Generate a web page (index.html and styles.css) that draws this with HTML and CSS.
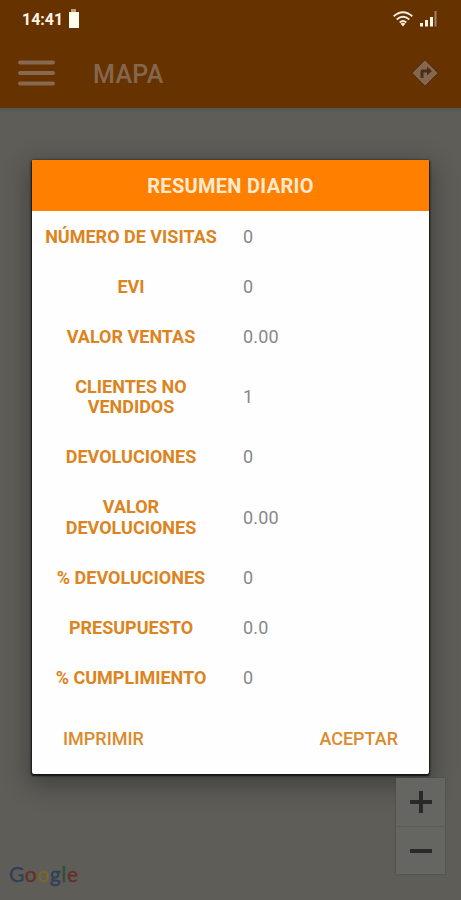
FILE: index.html
```html
<!DOCTYPE html>
<html lang="es">
<head>
<meta charset="utf-8">
<title>Mapa</title>
<link rel="stylesheet" href="styles.css">
</head>
<body>
<div class="screen">
  <header class="top">
    <div class="status">
      <span class="time">14:41</span>
      <svg class="battery" width="12" height="20" viewBox="0 0 12 20"><path fill="#c49a70" d="M3 0h5v3H3z"/><path fill="#fffdf0" d="M1 3h10v16H1z"/></svg>
      <svg class="wifi" width="20" height="16" viewBox="0 0 20 16" fill="none" stroke="#f8eee2" stroke-width="1.8"><path d="M.7 5.2Q10-2.800 19.300 5.200M3.700 8.500Q10 3 16.300 8.500M6.700 11.500Q10 8.600 13.300 11.500"/><path fill="#f8eee2" stroke="none" d="M7.600 12.700Q10 11 12.400 12.700L10 15.500z"/></svg>
      <svg class="signal" width="18" height="16" viewBox="0 0 18 16" fill="#fff6e8"><path d="M0 12h3v3.500H0zM5 9h3v6.500H5zM10 6h3v9.500h-3z"/><path fill="#a18368" d="M14.500 0h2v15.500h-2z"/></svg>
    </div>
    <div class="toolbar">
      <svg class="menu" width="37" height="26" viewBox="0 0 37 26" stroke="#87694f" stroke-width="4" stroke-linecap="round"><path d="M2 2.500h33M2 13h33M2 23.500h33"/></svg>
      <h1 class="title">MAPA</h1>
      <svg class="route" width="28" height="28" viewBox="0 0 28 28"><path fill="#85674d" stroke="#4c2d10" stroke-width="1" stroke-linejoin="round" d="M14 .8 27.200 14 14 27.200.8 14z"/><path fill="#492f1a" d="M9.500 19v-6.500q0-2 2-2H16V7.500l5 4.500-5 4.500v-3h-3.500V19z"/></svg>
    </div>
  </header>
  <main class="map">
    <section class="dialog">
      <h2 class="heading">RESUMEN DIARIO</h2>
      <dl class="rows">
        <div class="row"><dt>NÚMERO DE VISITAS</dt><dd>0</dd></div>
        <div class="row"><dt>EVI</dt><dd>0</dd></div>
        <div class="row"><dt>VALOR VENTAS</dt><dd>0.00</dd></div>
        <div class="row"><dt>CLIENTES NO<br>VENDIDOS</dt><dd>1</dd></div>
        <div class="row"><dt>DEVOLUCIONES</dt><dd>0</dd></div>
        <div class="row"><dt>VALOR<br>DEVOLUCIONES</dt><dd>0.00</dd></div>
        <div class="row"><dt>% DEVOLUCIONES</dt><dd>0</dd></div>
        <div class="row"><dt>PRESUPUESTO</dt><dd>0.0</dd></div>
        <div class="row"><dt>% CUMPLIMIENTO</dt><dd>0</dd></div>
      </dl>
      <div class="actions"><button>IMPRIMIR</button><button>ACEPTAR</button></div>
    </section>
    <div class="controls">
      <div class="google"><span class="b">G</span><span class="r">o</span><span class="y">o</span><span class="b">g</span><span class="g">l</span><span class="r">e</span></div>
      <div class="zoom">
        <div class="key"><svg width="22" height="22" viewBox="0 0 22 22" stroke="#292928" stroke-width="4"><path d="M0 11h22M11 0v22"/></svg></div>
        <div class="key"><svg width="22" height="22" viewBox="0 0 22 22" stroke="#292928" stroke-width="4"><path d="M0 11h22"/></svg></div>
      </div>
    </div>
  </main>
</div>
</body>
</html>
```
FILE: styles.css
```css
* { box-sizing: border-box; }
body { margin: 0; font-family: Roboto, sans-serif; }
.screen { width: 461px; height: 900px; display: flex; flex-direction: column; overflow: hidden; background: #5e5d58; }
.top { height: 108px; background: #663300; flex: none; }
.status { height: 38px; display: flex; align-items: center; padding: 0 23px 0 22px; }
.time { width: 40px; font-size: 16px; font-weight: 700; color: #fff4e6; white-space: nowrap; }
.battery { margin-left: 6px; }
.wifi { margin-left: auto; }
.signal { margin-left: 7px; }
.toolbar { height: 70px; display: flex; align-items: center; padding: 0 22px 0 18px; }
.title { margin: 3px 0 0 38px; font-size: 25px; font-weight: 500; line-height: 30px; letter-spacing: .3px; color: #85674d; }
.route { margin-left: auto; }
.map { flex: 1; display: flex; flex-direction: column; padding: 52px 0 0; background: linear-gradient(#55554f 0, #5e5d58 5px); }
.dialog { width: 397px; height: 614px; margin-left: 32px; flex: none; background: #fefefe; border-radius: 2px; box-shadow: 0 1px 2px 1px #111, 0 8px 24px 4px rgba(0, 0, 0, .3); overflow: hidden; }
.heading { height: 51px; margin: 0; display: flex; align-items: center; justify-content: center; background: #ff8000; color: #ffead0; font-size: 20px; font-weight: 700; letter-spacing: .3px; }
.rows { margin: 1.300px 0 0; }
.row { display: flex; align-items: center; padding: 14.500px 0; line-height: 20.900px; }
.row dt { width: 198px; text-align: center; font-size: 18px; font-weight: 700; color: #dc8420; white-space: nowrap; }
.row dd { margin: 0 0 0 13px; font-size: 18px; letter-spacing: .2px; color: #888; }
.actions { display: flex; justify-content: space-between; padding: 24.700px 31px 0 31px; }
.actions button { padding: 0; border: 0; background: none; font: 500 18px/21px Roboto, sans-serif; color: #dc8a2c; }
.controls { display: flex; justify-content: space-between; align-items: flex-start; padding: 4px 16px 0 9px; }
.google { margin-top: 83px; font: 21px/26px Lato, sans-serif; letter-spacing: .6px; -webkit-text-stroke: .4px; }
.b { color: #313e58; }
.r { color: #653029; }
.y { color: #77692a; }
.g { color: #2c5138; }
.zoom { width: 49px; background: #656561; box-shadow: 0 0 2px #454541; }
.key { height: 48px; display: flex; align-items: center; justify-content: center; }
.key + .key { border-top: 1px solid #5b5b57; }
```
